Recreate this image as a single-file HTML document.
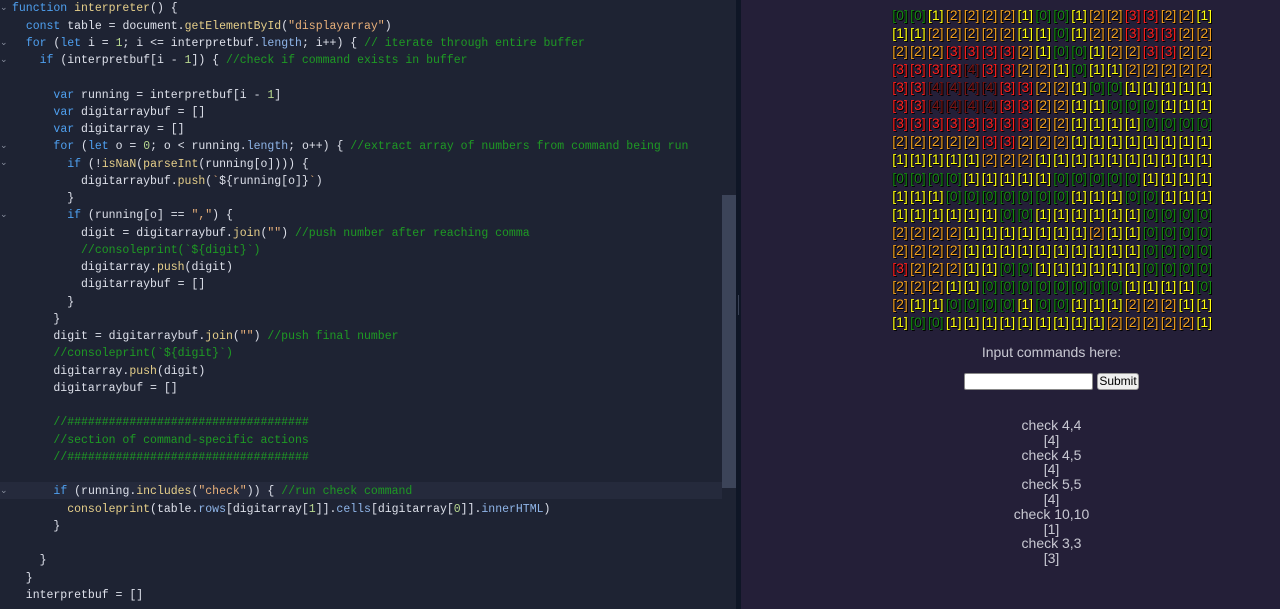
<!DOCTYPE html>
<html><head><meta charset="utf-8"><style>
*{margin:0;padding:0;box-sizing:border-box}
body{width:1280px;height:609px;overflow:hidden;background:#241f38;position:relative;font-family:"Liberation Sans",Arial,sans-serif}
#ed{position:absolute;left:0;top:0;width:736px;height:609px;background:#1e2333;overflow:hidden}
#hl{position:absolute;left:0;top:482px;width:722px;height:17px;background:#252a3c}
#sb{position:absolute;left:722px;top:195px;width:14px;height:293px;background:#3c4459}
#dv{position:absolute;left:736px;top:0;width:5px;height:609px;background:#0f1626}
#dv i{position:absolute;left:2px;top:295px;width:1px;height:20px;background:#3a4256}
pre{position:absolute;left:12px;top:0.4px;font-family:"Liberation Mono","DejaVu Sans Mono",monospace;font-size:11.5px;line-height:17.25px;color:#dde0ea;white-space:pre}
.k{color:#4fa0f0}.f{color:#e6cf8a}.s{color:#e8b07a}.c{color:#1e9a24}.n{color:#b8d890}.p{color:#8fb5e8}
.fold{position:absolute;left:0;font-size:9px;color:#8a90a0;font-family:"DejaVu Sans",sans-serif}
.g{position:absolute;width:18px;text-align:center;font-size:14px;line-height:16px;text-shadow:1px 1px 0 #000,-0.5px 0 0 #000}
.v0{color:#168a12}.v1{color:#ffff10}.v2{color:#f0a020}.v3{color:#ff2020}.v4{color:#7a1414}
.t{position:absolute;left:782px;width:539px;text-align:center;color:#c8c8d2;font-size:14px}
#inp{position:absolute;left:964px;top:373px;width:129px;height:17px;background:#fff;border:1px solid #888;border-radius:2px}
#btn{position:absolute;left:1097px;top:373px;width:42px;height:17px;background:#efefef;border:1px solid #999;border-radius:3px;font-size:12px;line-height:15px;text-align:center;color:#000}
</style></head><body>
<div id="ed">
<div id="hl"></div>
<span class="fold" style="top:3px">⌄</span>
<span class="fold" style="top:38px">⌄</span>
<span class="fold" style="top:55px">⌄</span>
<span class="fold" style="top:141px">⌄</span>
<span class="fold" style="top:158px">⌄</span>
<span class="fold" style="top:210px">⌄</span>
<span class="fold" style="top:486px">⌄</span>
<pre><span class="k">function</span> <span class="f">interpreter</span>() {
  <span class="k">const</span> table = document.<span class="f">getElementById</span>(<span class="s">"displayarray"</span>)
  <span class="k">for</span> (<span class="k">let</span> i = <span class="n">1</span>; i &lt;= interpretbuf.<span class="p">length</span>; i++) { <span class="c">// iterate through entire buffer</span>
    <span class="k">if</span> (interpretbuf[i - <span class="n">1</span>]) { <span class="c">//check if command exists in buffer</span>

      <span class="k">var</span> running = interpretbuf[i - <span class="n">1</span>]
      <span class="k">var</span> digitarraybuf = []
      <span class="k">var</span> digitarray = []
      <span class="k">for</span> (<span class="k">let</span> o = <span class="n">0</span>; o &lt; running.<span class="p">length</span>; o++) { <span class="c">//extract array of numbers from command being run</span>
        <span class="k">if</span> (!<span class="f">isNaN</span>(<span class="f">parseInt</span>(running[o]))) {
          digitarraybuf.<span class="f">push</span>(<span class="s">`</span>${running[o]}<span class="s">`</span>)
        }
        <span class="k">if</span> (running[o] == <span class="s">","</span>) {
          digit = digitarraybuf.<span class="f">join</span>(<span class="s">""</span>) <span class="c">//push number after reaching comma</span>
          <span class="c">//consoleprint(`${digit}`)</span>
          digitarray.<span class="f">push</span>(digit)
          digitarraybuf = []
        }
      }
      digit = digitarraybuf.<span class="f">join</span>(<span class="s">""</span>) <span class="c">//push final number</span>
      <span class="c">//consoleprint(`${digit}`)</span>
      digitarray.<span class="f">push</span>(digit)
      digitarraybuf = []

      <span class="c">//###################################</span>
      <span class="c">//section of command-specific actions</span>
      <span class="c">//###################################</span>

      <span class="k">if</span> (running.<span class="f">includes</span>(<span class="s">"check"</span>)) { <span class="c">//run check command</span>
        <span class="f">consoleprint</span>(table.<span class="p">rows</span>[digitarray[<span class="n">1</span>]].<span class="p">cells</span>[digitarray[<span class="n">0</span>]].<span class="p">innerHTML</span>)
      }

    }
  }
  interpretbuf = []</pre>
<div id="sb"></div>
</div>
<div id="dv"><i></i></div>
<div id="grid"></div>
<div class="t" style="top:344px">Input commands here:</div>
<div id="inp"></div>
<div id="btn">Submit</div>
<div class="t" style="top:418px;line-height:14.8px">check 4,4<br>[4]<br>check 4,5<br>[4]<br>check 5,5<br>[4]<br>check 10,10<br>[1]<br>check 3,3<br>[3]</div>
<script>
var rows=["001222210012233221","112222211012233322","222333321001223322","333343322101122222","334444332210011111","334444332211000111","333333332211110000","222223322211111111","111112221111111111","000011111000001111","111000000011100111","111111001111110000","222211111112110000","222211111111110000","322211001111110000","222110000000011110","211000010011122211","100111111111222221"];
var h="";
for(var r=0;r<18;r++)for(var c=0;c<18;c++){var v=rows[r][c];h+='<div class="g v'+v+'" style="left:'+(891+c*17.9)+'px;top:'+(7+r*18.06)+'px">['+v+']</div>';}
document.getElementById("grid").innerHTML=h;
</script>
</body></html>
